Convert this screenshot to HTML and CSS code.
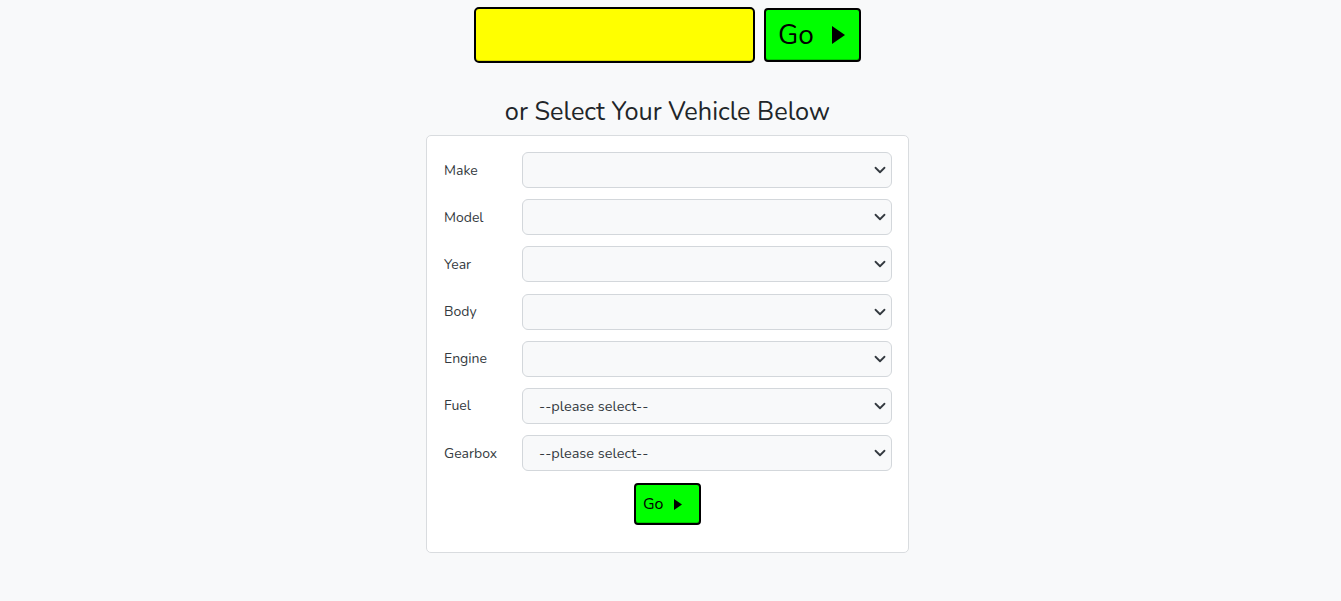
FILE: index.html
```html
<!DOCTYPE html>
<html>
<head>
<meta charset="utf-8">
<link rel="stylesheet" href="styles.css">
</head>
<body>
<div class="page">
  <div class="quick">
    <input class="reg" type="text">
    <button class="go go-big"><span>Go</span><svg class="tri" viewBox="0 0 13 18" width="13" height="18"><path d="M0 0 L13 9 L0 18 Z"/></svg></button>
  </div>
  <h2 class="title">or Select Your Vehicle Below</h2>
  <div class="card">
    <div class="row"><label>Make</label><select></select></div>
    <div class="row"><label>Model</label><select></select></div>
    <div class="row"><label>Year</label><select></select></div>
    <div class="row"><label>Body</label><select></select></div>
    <div class="row"><label>Engine</label><select></select></div>
    <div class="row"><label>Fuel</label><select><option>--please select--</option></select></div>
    <div class="row"><label>Gearbox</label><select><option>--please select--</option></select></div>
    <div class="actions">
      <button class="go go-small"><span>Go</span><svg class="tri" viewBox="0 0 8 11" width="8" height="11"><path d="M0 0 L8 5.5 L0 11 Z"/></svg></button>
    </div>
  </div>
</div>
</body>
</html>
```
FILE: styles.css
```css
html, body {
  margin: 0;
  padding: 0;
  background: #f8f9fa;
  font-family: "Nunito", "Lato", "Open Sans", sans-serif;
  color: #212529;
}
.page {
  width: 1335px;
  display: flex;
  flex-direction: column;
  align-items: center;
}
.quick {
  display: flex;
  align-items: center;
  gap: 9px;
  margin-top: 7px;
}
.reg {
  width: 281px;
  height: 56px;
  box-sizing: border-box;
  background: #ffff00;
  border: 2px solid #000;
  border-radius: 5px;
  box-shadow: inset 0 -1px 0 rgba(0,0,0,0.15);
  margin: 0;
}
.go {
  background: #00ff00;
  border: 2px solid #000;
  border-radius: 4px;
  font-family: inherit;
  color: #000;
  display: flex;
  align-items: center;
  justify-content: flex-start;
  box-sizing: border-box;
  margin: 0;
  cursor: pointer;
  box-shadow: inset 0 -1px 0 rgba(0,0,0,0.2);
}
.go-big {
  width: 97px;
  height: 54px;
  font-size: 28px;
  gap: 18px;
  padding: 0 0 0 12px;
}
.go-small {
  width: 67px;
  height: 42px;
  font-size: 16px;
  gap: 10px;
  padding: 0 0 0 7px;
}
.go span { line-height: 1; }
.tri path { fill: #000; }
.title {
  font-weight: 400;
  font-size: 25.3px;
  margin: 33px 0 0;
  line-height: 32px;
  height: 32px;
}
.card {
  margin-top: 7px;
  width: 483px;
  box-sizing: border-box;
  background: #fff;
  border: 1px solid #d9dcdf;
  border-radius: 5px;
  padding: 16px 16px 27px;
  display: flex;
  flex-direction: column;
  gap: 11.2px;
}
.row {
  display: grid;
  grid-template-columns: 79px 1fr;
  align-items: center;
}
.row label {
  font-size: 14px;
  color: #343a40;
  padding-left: 1px;
}
.row select {
  appearance: none;
  -webkit-appearance: none;
  height: 36px;
  box-sizing: border-box;
  background-color: #f8f9fa;
  background-image: url("data:image/svg+xml,%3csvg xmlns='http://www.w3.org/2000/svg' viewBox='0 0 16 16'%3e%3cpath fill='none' stroke='%23343a40' stroke-linecap='round' stroke-linejoin='round' stroke-width='2.4' d='M2 5l6 6 6-6'/%3e%3c/svg%3e");
  background-repeat: no-repeat;
  background-position: right 5px center;
  background-size: 12px 12px;
  border: 1px solid #d3d7db;
  border-radius: 6px;
  padding: 0 28px 0 16px;
  font-family: inherit;
  font-size: 14.5px;
  color: #343a40;
  margin: 0;
}
.actions {
  display: flex;
  justify-content: center;
  padding-top: 1px;
}
```
